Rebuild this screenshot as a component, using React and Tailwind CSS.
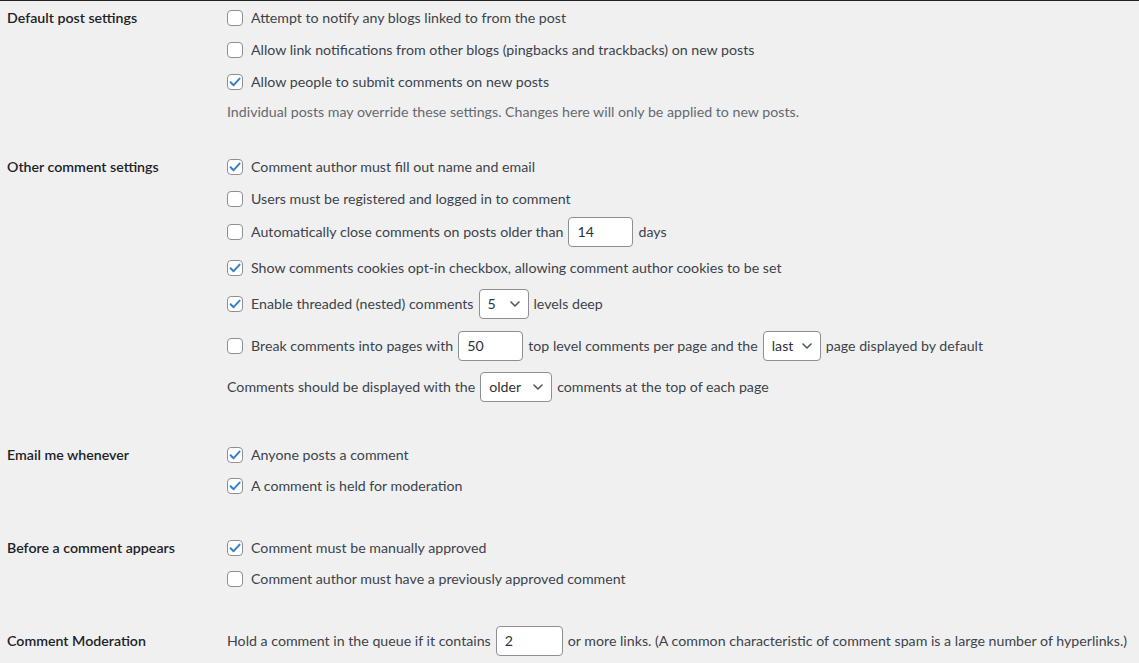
import React from 'react';

const Checkbox = ({ checked }) => (
  <span className="mr-[8px] flex h-[16px] w-[16px] shrink-0 items-center justify-center rounded-[4px] border border-[#8c8f94] bg-white">
    {checked && (
      <svg width="14" height="14" viewBox="0 0 14 14">
        <path d="M2.6 7.2 L5.6 10.2 L11.6 3.6" fill="none" stroke="#3582c4" strokeWidth="2" strokeLinecap="round" strokeLinejoin="round" />
      </svg>
    )}
  </span>
);

const TextInput = ({ value, w }) => (
  <span className={`mx-[5px] flex h-[30px] items-center rounded-[4px] border border-[#8c8f94] bg-white pl-[8px] text-[#2c3338] ${w}`}>
    {value}
  </span>
);

const Select = ({ value, w }) => (
  <span className={`mx-[5px] flex h-[30px] items-center justify-between rounded-[4px] border border-[#8c8f94] bg-white pl-[8px] pr-[8px] text-[#2c3338] ${w}`}>
    <span>{value}</span>
    <svg width="10" height="6" viewBox="0 0 10 6">
      <path d="M1 1 L5 5 L9 1" fill="none" stroke="#50575e" strokeWidth="1.6" strokeLinecap="round" strokeLinejoin="round" />
    </svg>
  </span>
);

const Row = ({ h, children }) => (
  <div className={`flex items-center ${h}`}>{children}</div>
);

const Section = ({ title, mt, children }) => (
  <div className={`flex ${mt}`}>
    <div className="flex h-[32px] w-[220px] shrink-0 items-center font-semibold text-[#1d2327]">{title}</div>
    <div className="flex flex-col text-[#3c434a]">{children}</div>
  </div>
);

export default function App() {
  return (
    <div
      className="h-[663px] w-[1139px] overflow-hidden border-t border-[#1d2327] bg-[#f0f0f1] pl-[7px] text-[14.2px]"
      style={{ fontFamily: 'Lato, "Open Sans", sans-serif' }}
    >
      <Section title="Default post settings" mt="mt-[1px]">
        <Row h="h-[32px]"><Checkbox />Attempt to notify any blogs linked to from the post</Row>
        <Row h="h-[32px]"><Checkbox />Allow link notifications from other blogs (pingbacks and trackbacks) on new posts</Row>
        <Row h="h-[32px]"><Checkbox checked />Allow people to submit comments on new posts</Row>
        <Row h="h-[28px]">
          <span className="text-[#646970]">Individual posts may override these settings. Changes here will only be applied to new posts.</span>
        </Row>
      </Section>

      <Section title="Other comment settings" mt="mt-[25px]">
        <Row h="h-[32px]"><Checkbox checked />Comment author must fill out name and email</Row>
        <Row h="h-[31px]"><Checkbox />Users must be registered and logged in to comment</Row>
        <Row h="h-[36px]">
          <Checkbox />Automatically close comments on posts older than
          <TextInput value="14" w="w-[65px]" />days
        </Row>
        <Row h="h-[36px]"><Checkbox checked />Show comments cookies opt-in checkbox, allowing comment author cookies to be set</Row>
        <Row h="h-[36px]">
          <Checkbox checked />Enable threaded (nested) comments
          <Select value="5" w="w-[50px]" />levels deep
        </Row>
        <Row h="h-[48px]">
          <Checkbox />Break comments into pages with
          <TextInput value="50" w="w-[65px]" />top level comments per page and the
          <Select value="last" w="w-[58px]" />page displayed by default
        </Row>
        <Row h="h-[34px]">
          Comments should be displayed with the
          <Select value="older" w="w-[72px]" />comments at the top of each page
        </Row>
      </Section>

      <Section title="Email me whenever" mt="mt-[35px]">
        <Row h="h-[32px]"><Checkbox checked />Anyone posts a comment</Row>
        <Row h="h-[30px]"><Checkbox checked />A comment is held for moderation</Row>
      </Section>

      <Section title="Before a comment appears" mt="mt-[31px]">
        <Row h="h-[32px]"><Checkbox checked />Comment must be manually approved</Row>
        <Row h="h-[30px]"><Checkbox />Comment author must have a previously approved comment</Row>
      </Section>

      <Section title="Comment Moderation" mt="mt-[31px]">
        <Row h="h-[32px]">
          Hold a comment in the queue if it contains
          <TextInput value="2" w="w-[67px]" />or more links. (A common characteristic of comment spam is a large number of hyperlinks.)
        </Row>
      </Section>
    </div>
  );
}
